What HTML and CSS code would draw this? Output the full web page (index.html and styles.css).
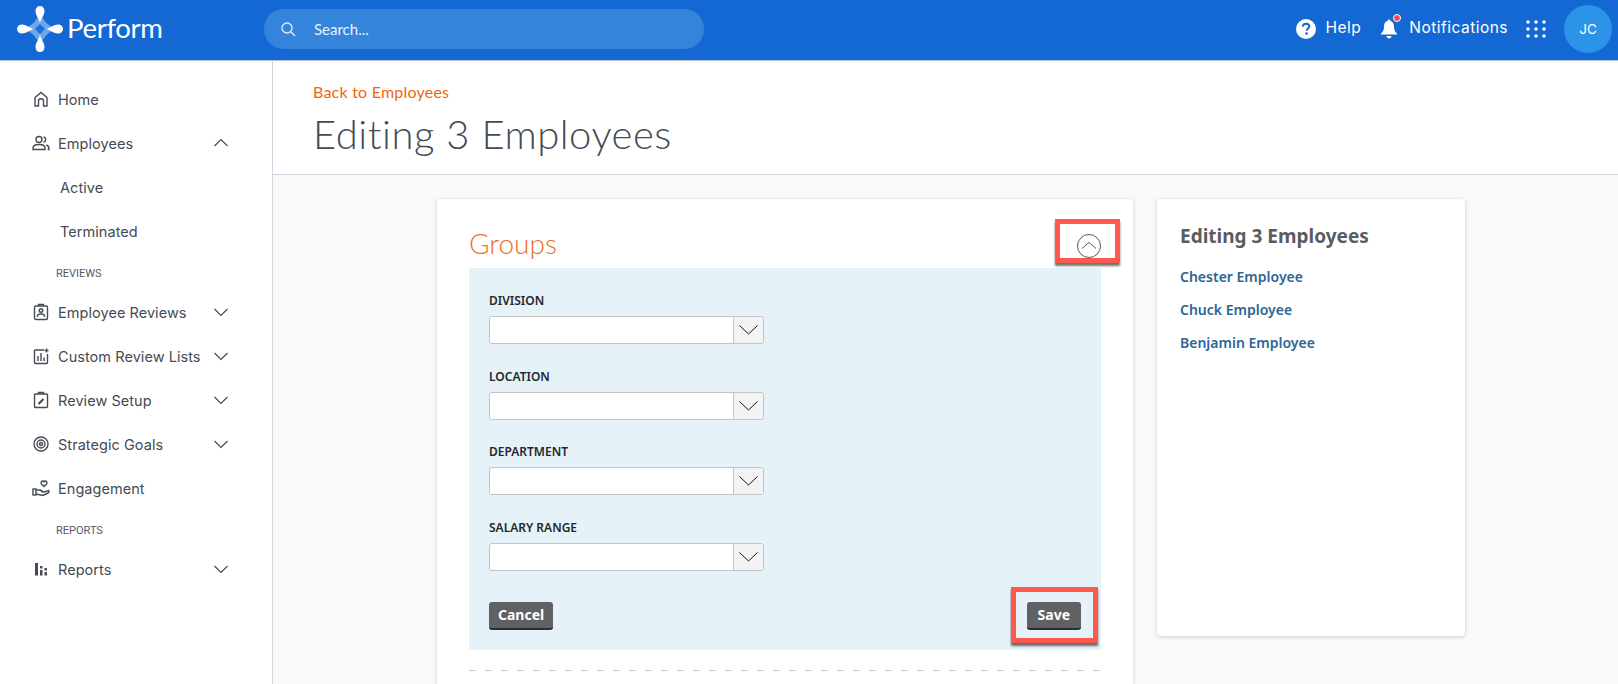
FILE: index.html
```html
<!DOCTYPE html>
<html lang="en">
<head>
<meta charset="utf-8">
<title>Editing 3 Employees</title>
<link rel="stylesheet" href="styles.css">
</head>
<body>
<header class="topbar">
  <div class="brand">
    <svg class="brand-mark" viewBox="0 0 46 46" width="46" height="46">
      <path fill="#6ea5e8" d="M23 6Q27 19 40 23Q27 27 23 40Q19 27 6 23Q19 19 23 6Z"/>
      <path fill="#1a6fd8" d="M23 18L28 23L23 28L18 23Z"/>
      <path fill="#fff" d="M23 17C21.500 12 18.500 9 18.500 5C18.500 2 20.500 0 23 0C25.500 0 27.500 2 27.500 5C27.500 9 24.500 12 23 17Z"/>
      <path fill="#fff" transform="rotate(90 23 23)" d="M23 17C21.500 12 18.500 9 18.500 5C18.500 2 20.500 0 23 0C25.500 0 27.500 2 27.500 5C27.500 9 24.500 12 23 17Z"/>
      <path fill="#fff" transform="rotate(180 23 23)" d="M23 17C21.500 12 18.500 9 18.500 5C18.500 2 20.500 0 23 0C25.500 0 27.500 2 27.500 5C27.500 9 24.500 12 23 17Z"/>
      <path fill="#fff" transform="rotate(270 23 23)" d="M23 17C21.500 12 18.500 9 18.500 5C18.500 2 20.500 0 23 0C25.500 0 27.500 2 27.500 5C27.500 9 24.500 12 23 17Z"/>
    </svg>
    <span class="brand-name">Perform</span>
  </div>
  <div class="search">
    <svg viewBox="0 0 16 16" width="16" height="16" fill="none" stroke="#dce9f8" stroke-width="1.400"><circle cx="7" cy="7" r="5"/><path d="M10.700 10.700L15 15"/></svg>
    <span>Search...</span>
  </div>
  <div class="top-actions">
    <svg class="help-icon" viewBox="0 0 20 20" width="20" height="20"><circle cx="10" cy="10" r="10" fill="#fff"/><path d="M6.800 7.600C6.900 5.700 8.200 4.700 10.100 4.700C12 4.700 13.300 5.800 13.300 7.300C13.300 9.400 10.700 9.500 10.700 11.700" fill="none" stroke="#1368d3" stroke-width="2"/><circle cx="10.600" cy="14.600" r="1.300" fill="#1368d3"/></svg>
    <span class="top-link help-label">Help</span>
    <span class="bell">
      <svg viewBox="0 0 16 21" width="16" height="21" fill="#fff"><path d="M8 1.500C8.800 1.500 9.200 2 9.200 2.800C11.800 3.400 13 5.500 13 8.500C13 12 14 14 16 15.500V16.500H0V15.500C2 14 3 12 3 8.500C3 5.500 4.200 3.400 6.800 2.800C6.800 2 7.200 1.500 8 1.500Z"/><path d="M5.500 18H10.500C10.300 19.500 9.300 20.500 8 20.500C6.700 20.500 5.700 19.500 5.500 18Z"/></svg>
      <i class="bell-dot"></i>
    </span>
    <span class="top-link">Notifications</span>
    <svg class="apps" viewBox="0 0 20 18" width="20" height="18" fill="#fff"><circle cx="2" cy="2" r="1.800"/><circle cx="10" cy="2" r="1.800"/><circle cx="18" cy="2" r="1.800"/><circle cx="2" cy="9" r="1.800"/><circle cx="10" cy="9" r="1.800"/><circle cx="18" cy="9" r="1.800"/><circle cx="2" cy="16" r="1.800"/><circle cx="10" cy="16" r="1.800"/><circle cx="18" cy="16" r="1.800"/></svg>
    <span class="avatar">JC</span>
  </div>
</header>

<div class="shell">
  <nav class="sidebar">
    <a class="nav-row">
      <svg class="nav-icon" viewBox="0 0 20 20"><path d="M4 17V8.500L10 3.500L16 8.500V17H12.500V12C12.500 9 7.500 9 7.500 12V17Z"/></svg>
      <span class="nav-label">Home</span>
    </a>
    <a class="nav-row">
      <svg class="nav-icon" viewBox="0 0 20 20"><circle cx="8" cy="6.500" r="3"/><path d="M2 16.500V15C2 12.800 4.500 11.500 8 11.500C11.500 11.500 14 12.800 14 15V16.500Z"/><path d="M12.500 3.800C14.200 4.300 14.800 5.500 14.700 6.700C14.600 8 13.800 9 12.500 9.300M15.500 12C17.200 12.700 18 13.800 18 15.500V16.500H16.500"/></svg>
      <span class="nav-label">Employees</span>
      <svg class="nav-chev" viewBox="0 0 16 16"><path d="M1.500 11L8 4.500L14.500 11"/></svg>
    </a>
    <a class="nav-sub">Active</a>
    <a class="nav-sub">Terminated</a>
    <div class="nav-section">REVIEWS</div>
    <a class="nav-row">
      <svg class="nav-icon" viewBox="0 0 20 20"><rect x="3.500" y="4" width="13" height="13.500" rx="1.500"/><path d="M7.500 4V2.500H12.500V4"/><circle cx="10" cy="8.500" r="1.800"/><path d="M6.500 15V14C6.500 12.800 8 12 10 12C12 12 13.500 12.800 13.500 14V15"/></svg>
      <span class="nav-label">Employee Reviews</span>
      <svg class="nav-chev" viewBox="0 0 16 16"><path d="M1.500 5L8 11.500L14.500 5"/></svg>
    </a>
    <a class="nav-row">
      <svg class="nav-icon" viewBox="0 0 20 20"><path d="M13 4H4.500C3.900 4 3.500 4.400 3.500 5V16.500C3.500 17.100 3.900 17.500 4.500 17.500H15.500C16.100 17.500 16.500 17.100 16.500 16.500V8"/><path d="M7 15V10M10 15V7M13 15V11.500M15.500 2.500V6.500M13.500 4.500H17.500"/></svg>
      <span class="nav-label">Custom Review Lists</span>
      <svg class="nav-chev" viewBox="0 0 16 16"><path d="M1.500 5L8 11.500L14.500 5"/></svg>
    </a>
    <a class="nav-row">
      <svg class="nav-icon" viewBox="0 0 20 20"><rect x="3.500" y="4" width="13" height="13.500" rx="1"/><path d="M7.500 4V2.500H12.500V4"/><path class="icon-heavy" d="M7.500 14L12.500 9"/></svg>
      <span class="nav-label">Review Setup</span>
      <svg class="nav-chev" viewBox="0 0 16 16"><path d="M1.500 5L8 11.500L14.500 5"/></svg>
    </a>
    <a class="nav-row">
      <svg class="nav-icon" viewBox="0 0 20 20"><circle cx="10" cy="10" r="7"/><circle cx="10" cy="10" r="4"/><circle cx="10" cy="10" r="1.500"/></svg>
      <span class="nav-label">Strategic Goals</span>
      <svg class="nav-chev" viewBox="0 0 16 16"><path d="M1.500 5L8 11.500L14.500 5"/></svg>
    </a>
    <a class="nav-row">
      <svg class="nav-icon" viewBox="0 0 20 20"><rect x="2" y="11" width="3" height="6"/><path d="M5 12H9L12 13.500H10L13 14L17.500 12.500C18.500 13.500 18 14.500 17 15L12 17.500L5 16"/><path d="M13 8.500L10.500 6C9.500 4.800 10.300 3 11.800 3C12.500 3 12.800 3.400 13 3.800C13.200 3.400 13.500 3 14.200 3C15.700 3 16.500 4.800 15.500 6Z"/></svg>
      <span class="nav-label">Engagement</span>
    </a>
    <div class="nav-section">REPORTS</div>
    <a class="nav-row">
      <svg class="nav-icon nav-icon-solid" viewBox="0 0 20 20"><rect x="4" y="4" width="3" height="12.500"/><rect x="9" y="7" width="2.500" height="2.500"/><rect x="9" y="11" width="2.500" height="5.500"/><rect x="13.500" y="9" width="2.500" height="2.500"/><rect x="13.500" y="13" width="2.500" height="3.500"/></svg>
      <span class="nav-label">Reports</span>
      <svg class="nav-chev" viewBox="0 0 16 16"><path d="M1.500 5L8 11.500L14.500 5"/></svg>
    </a>
  </nav>

  <main class="main">
    <div class="page-head">
      <a class="back-link">Back to Employees</a>
      <h1 class="page-title">Editing 3 Employees</h1>
    </div>
    <div class="content">
      <section class="card form-card">
        <div class="card-head">
          <h2 class="card-title">Groups</h2>
          <svg class="collapse" viewBox="0 0 24 24" width="24" height="24" fill="none" stroke="#555"><circle cx="12" cy="12" r="11.500"/><path d="M5 14.500L12 8.500L19 14.500"/></svg>
          <span class="callout callout-collapse"></span>
        </div>
        <div class="panel">
          <div class="field">
            <label class="field-label">DIVISION</label>
            <div class="select"><span class="select-arrow"><svg viewBox="0 0 19 10" width="19" height="10"><path d="M.5 .5L9.500 9L18.500 .5"/></svg></span></div>
          </div>
          <div class="field">
            <label class="field-label">LOCATION</label>
            <div class="select"><span class="select-arrow"><svg viewBox="0 0 19 10" width="19" height="10"><path d="M.5 .5L9.500 9L18.500 .5"/></svg></span></div>
          </div>
          <div class="field">
            <label class="field-label">DEPARTMENT</label>
            <div class="select"><span class="select-arrow"><svg viewBox="0 0 19 10" width="19" height="10"><path d="M.5 .5L9.500 9L18.500 .5"/></svg></span></div>
          </div>
          <div class="field">
            <label class="field-label">SALARY RANGE</label>
            <div class="select"><span class="select-arrow"><svg viewBox="0 0 19 10" width="19" height="10"><path d="M.5 .5L9.500 9L18.500 .5"/></svg></span></div>
          </div>
          <div class="panel-actions">
            <button class="btn">Cancel</button>
            <span class="save-wrap">
              <button class="btn btn-save">Save</button>
              <span class="callout callout-save"></span>
            </span>
          </div>
        </div>
        <div class="dash-rule"></div>
      </section>
      <aside class="card side-card">
        <h3 class="side-title">Editing 3 Employees</h3>
        <a class="side-link">Chester Employee</a>
        <a class="side-link">Chuck Employee</a>
        <a class="side-link">Benjamin Employee</a>
      </aside>
    </div>
  </main>
</div>
</body>
</html>
```
FILE: styles.css
```css
* { box-sizing: border-box; }
html, body { height: 100%; }
body {
  margin: 0;
  overflow: hidden;
  font-family: "Inter", sans-serif;
  background: #fff;
}
.topbar {
  height: 61px;
  display: flex;
  align-items: center;
  background: #1368d3;
  border-bottom: 1px solid #b8c4d0;
  padding: 0 6px 0 17px;
}
.brand { display: flex; align-items: center; width: 247px; }
.brand-mark { flex: none; margin-top: -3px; }
.brand-name {
  margin-left: 4px;
  margin-top: -5px;
  color: #fff;
  font-family: "Lato", sans-serif;
  font-size: 27.500px;
  font-weight: 400;
  letter-spacing: -.3px;
}
.search {
  width: 440px;
  height: 40px;
  margin-top: -2px;
  display: flex;
  align-items: center;
  gap: 18px;
  padding-left: 16px;
  border-radius: 20px;
  background: #3584dc;
  color: #e8f1fb;
  font-family: "Lato", sans-serif;
  font-size: 15px;
}
.top-actions {
  margin-left: auto;
  display: flex;
  align-items: center;
  color: #fff;
}
.top-link { font-size: 15.500px; letter-spacing: .48px; margin-top: -5px; }
.help-icon { margin-top: -2px; }
.help-label { margin-left: 10px; margin-right: 20px; }
.bell { position: relative; width: 16px; height: 21px; margin-right: 12px; margin-top: -3px; }
.bell svg { display: block; }
.bell-dot {
  position: absolute;
  top: -4px;
  right: -4px;
  width: 8px;
  height: 8px;
  border-radius: 50%;
  background: #ee4c56;
  border: 1px solid #fff;
}
.apps { margin-left: 18px; margin-top: -3px; }
.avatar {
  margin-left: 18px;
  margin-top: -2px;
  width: 48px;
  height: 48px;
  border-radius: 50%;
  background: #2b94e8;
  display: flex;
  align-items: center;
  justify-content: center;
  font-size: 13.500px;
}
.shell { display: flex; height: calc(100% - 61px); }
.sidebar {
  flex: none;
  width: 273px;
  padding-top: 16px;
  border-right: 1px solid #cdd5df;
  color: #454b54;
  font-size: 14.500px;
  letter-spacing: .05px;
}
.nav-row {
  height: 44px;
  display: flex;
  align-items: center;
  padding: 0 43px 0 31px;
}
.nav-icon {
  flex: none;
  width: 20px;
  height: 20px;
  fill: none;
  stroke: #454b54;
  stroke-width: 1.400;
}
.nav-icon-solid { fill: #454b54; stroke: none; }
.icon-heavy { stroke-width: 2.200; }
.nav-label { flex: 1; margin-left: 7px; }
.nav-chev {
  flex: none;
  width: 16px;
  height: 16px;
  fill: none;
  stroke: #454b54;
  stroke-width: 1.200;
}
.nav-sub { height: 44px; display: flex; align-items: center; padding-left: 60px; }
.nav-section {
  height: 37px;
  display: flex;
  align-items: center;
  padding: 3px 0 0 56px;
  font-family: "Roboto", sans-serif;
  font-size: 11px;
  letter-spacing: 0;
  color: #555b63;
}
.main { flex: 1; min-width: 0; overflow: hidden; background: #f9f9f9; }
.page-head {
  height: 114px;
  padding: 21px 0 0 40px;
  background: #fff;
  border-bottom: 1px solid #cdd5df;
}
.back-link {
  display: block;
  font-family: "Lato", sans-serif;
  font-size: 16px;
  letter-spacing: .22px;
  line-height: 20px;
  color: #f4640c;
}
.page-title {
  margin: 7px 0 0;
  font-family: "Lato", sans-serif;
  font-size: 40px;
  letter-spacing: .53px;
  line-height: 50px;
  font-weight: 300;
  color: #444b54;
}
.content { display: flex; align-items: flex-start; gap: 24px; padding: 24px 0 0 164px; }
.card {
  background: #fff;
  border-radius: 4px;
  box-shadow: 0 1px 4px rgba(0, 0, 0, .18);
}
.form-card { width: 696px; height: 485px; padding: 0 32px; border-radius: 4px 4px 0 0; }
.card-head { position: relative; height: 69px; }
.card-title {
  margin: 0;
  padding-top: 26px;
  font-family: "Lato", sans-serif;
  font-size: 28px;
  line-height: 36px;
  font-weight: 300;
  color: #f07022;
}
.collapse { position: absolute; top: 35px; right: 0; }
.callout {
  position: absolute;
  border: 5px solid #fd5a4d;
  box-shadow: 0 3px 2px rgba(0, 0, 0, .55);
}
.callout-collapse { top: 20px; right: -19px; width: 65px; height: 44px; }
.panel {
  height: 382px;
  padding: 21px 20px 0;
  background: #e5f2f8;
}
.field { margin-bottom: 20.670px; }
.field-label {
  display: block;
  height: 27px;
  padding-top: 2px;
  font-family: "Noto Sans", sans-serif;
  font-size: 12px;
  font-weight: 600;
  line-height: 20px;
  color: #24282d;
}
.select {
  width: 275px;
  height: 28px;
  display: flex;
  justify-content: flex-end;
  border: 1px solid #c4c4c4;
  border-radius: 3px;
  background: #fff;
}
.select-arrow {
  width: 30px;
  display: flex;
  align-items: center;
  justify-content: center;
  border-left: 1px solid #c4c4c4;
  background: #f3f3f3;
  border-radius: 0 2px 2px 0;
}
.select-arrow svg { fill: none; stroke: #111; stroke-width: 1; }
.panel-actions { display: flex; justify-content: space-between; padding-top: 10px; }
.save-wrap { position: relative; display: block; }
.btn {
  display: block;
  height: 28px;
  padding: 0 9px;
  border: 0;
  border-bottom: 2px solid #2b2c30;
  border-radius: 3px;
  background: #606164;
  color: #fff;
  font-family: "Noto Sans", sans-serif;
  font-size: 14px;
  font-weight: 700;
}
.btn-save { padding: 0 11px; }
.callout-save { top: -15px; left: -16px; width: 87px; height: 56px; }
.dash-rule {
  height: 1px;
  margin-top: 20px;
  background: repeating-linear-gradient(90deg, #c9c9c9 0 7px, transparent 7px 16px);
}
.side-card { width: 308px; height: 437px; padding: 24px 23px; }
.side-title {
  margin: 0 0 19px;
  padding-top: 1px;
  font-family: "Noto Sans", sans-serif;
  font-size: 19px;
  line-height: 24px;
  font-weight: 700;
  color: #5b5c60;
}
.side-link {
  display: block;
  height: 33px;
  font-family: "Noto Sans", sans-serif;
  font-size: 14px;
  line-height: 20px;
  font-weight: 600;
  color: #2e6594;
}
```
